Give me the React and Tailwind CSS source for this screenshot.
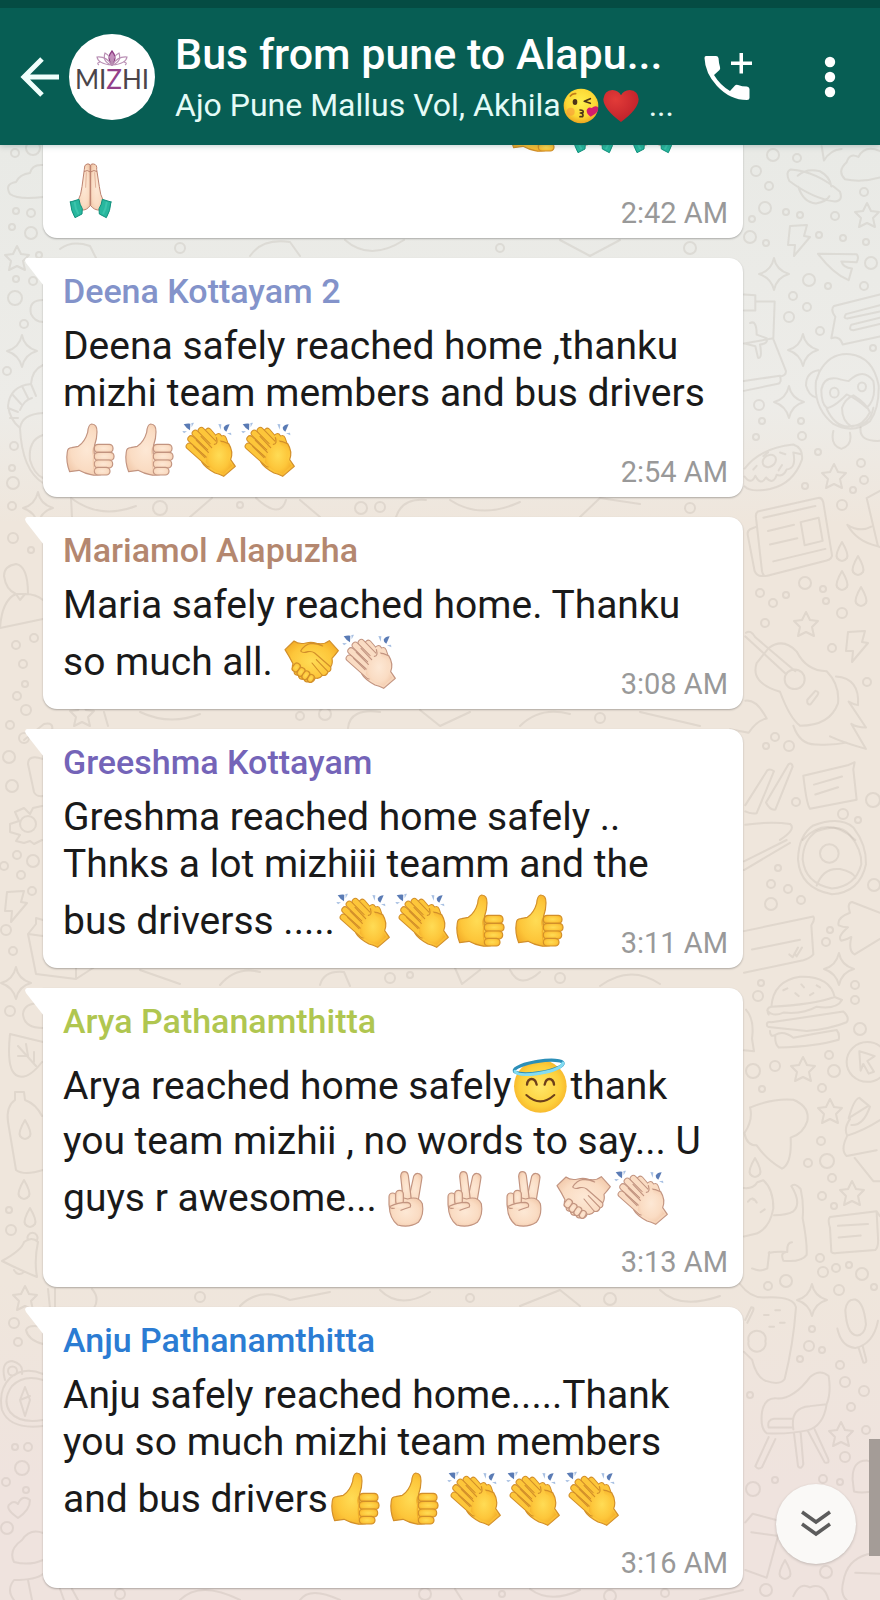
import React from "react";

/* ---------- emoji drawings (177 x 195 unit canvas) ---------- */

const YELLOW = { light: "#ffdc55", mid: "#fdc63a", dark: "#f0a422", line: "#d28f2a" };
const PALE = { light: "#fde8d5", mid: "#fadcc3", dark: "#efc3a3", line: "#c29480" };

function Emoji({ label, tone, children }) {
  const id = React.useId();
  return (
    <svg
      role="img"
      aria-label={label}
      viewBox="0 0 177 195"
      className="inline-block h-[65px] w-[59px] align-[-19px]"
    >
      {tone && (
        <defs>
          <radialGradient id={id} cx="50%" cy="50%" r="65%">
            <stop offset="0" stopColor={tone.light} />
            <stop offset="0.6" stopColor={tone.mid} />
            <stop offset="1" stopColor={tone.dark} />
          </radialGradient>
        </defs>
      )}
      {children(`url(#${id})`)}
    </svg>
  );
}

function Thumb({ tone = YELLOW }) {
  return (
    <Emoji label="thumbs up" tone={tone}>
      {(fill) => (
        <g fill={fill} stroke={tone.line} strokeWidth="3.5" strokeLinejoin="round" strokeLinecap="round">
          <path d="M13 104 Q14 93 26 92 L46 88 Q66 74 74 46 Q76 22 86 21 Q103 22 102 45 Q102 64 95 84 L132 88 L128 168 Q105 178 84 173 Q66 170 48 160 L20 164 Q8 134 13 104Z" />
          <rect x="94" y="82" width="56" height="24" rx="11" />
          <rect x="94" y="106" width="59" height="24" rx="11" />
          <rect x="94" y="129" width="55" height="24" rx="11" />
          <rect x="94" y="151" width="47" height="23" rx="11" />
          <path d="M92 88 Q84 100 90 118 Q87 146 94 165" fill={tone.dark} fillOpacity="0.7" stroke="none" />
          <path d="M95 84 Q91 98 94 110" fill="none" />
        </g>
      )}
    </Emoji>
  );
}

function Clap({ tone = YELLOW }) {
  const back = ["M82 44 L128 98", "M112 60 L136 104", "M126 66 L140 106"];
  const front = ["M61 41 L116 98", "M43 49 L106 112", "M30 66 L96 126", "M25 88 L84 140"];
  return (
    <Emoji label="clapping hands" tone={tone}>
      {(fill) => (
        <g strokeLinecap="round" strokeLinejoin="round">
          <g fill="#5a7bb5">
            <path d="M8 22 Q20 18 28 20 L27 40 Q16 34 8 22Z" />
            <path d="M128 32 Q134 22 146 22 L136 44 Q128 40 128 32Z" />
          </g>
          <g fill="#a9c1e3">
            <path d="M31 18 L39 17 L32 31Z" />
            <path d="M4 42 L18 43 L9 49Z" />
            <path d="M112 21 L121 22 L119 38Z" />
            <path d="M138 49 L150 47 L151 55Z" />
          </g>
          {back.map((d) => (
            <path key={d} d={d} fill="none" stroke={tone.line} strokeWidth="23" />
          ))}
          {back.map((d) => (
            <path key={d + "f"} d={d} fill="none" stroke={tone.mid} strokeWidth="17" />
          ))}
          <path
            d="M78 82 Q110 62 143 80 Q158 104 149 128 L163 148 L128 178 Q114 171 102 168 Q70 150 62 134Z"
            fill={fill}
            stroke={tone.line}
            strokeWidth="3.5"
          />
          {front.map((d) => (
            <g key={d} fill="none">
              <path d={d} stroke={tone.line} strokeWidth="22" />
              <path d={d} stroke={tone.mid} strokeWidth="16" />
            </g>
          ))}
          <path d="M84 80 Q112 84 106 60 Q118 66 122 84 Q148 96 143 126 L154 146 L128 170 L108 164 Q86 154 74 136Z" fill={fill} />
          <path d="M106 62 Q112 82 100 82 M60 58 L92 92 M46 70 L82 106 M38 88 L72 122" fill="none" stroke={tone.line} strokeWidth="3.5" />
        </g>
      )}
    </Emoji>
  );
}

function Handshake({ tone = YELLOW }) {
  return (
    <Emoji label="handshake" tone={tone}>
      {(fill) => (
        <g fill={fill} stroke={tone.line} strokeWidth="3.5" strokeLinejoin="round" strokeLinecap="round">
          <path d="M9 62 L36 36 Q50 47 72 42 Q88 38 104 43 Q126 48 142 35 L169 65 Q158 80 150 88 Q153 104 146 114 Q149 126 138 129 Q133 142 121 139 Q112 151 100 147 Q93 164 79 158 Q69 161 66 151 Q49 152 49 139 Q34 139 37 124 Q28 116 33 104 Q24 86 9 62Z" />
          <path d="M56 66 Q68 46 88 43 Q108 43 122 51 M56 66 Q62 74 78 68 Q90 66 98 72 L146 114 M103 92 L138 128 M90 102 L120 138" fill="none" />
          <rect x="33" y="102" width="20" height="27" rx="9" transform="rotate(35 43 115)" />
          <rect x="48" y="115" width="19" height="27" rx="9" transform="rotate(35 57 128)" />
          <rect x="63" y="125" width="18" height="28" rx="9" transform="rotate(35 72 138)" />
          <rect x="78" y="136" width="17" height="24" rx="8" transform="rotate(30 86 148)" />
        </g>
      )}
    </Emoji>
  );
}

function Victory({ tone = PALE }) {
  return (
    <Emoji label="victory hand" tone={tone}>
      {(fill) => (
        <g fill={fill} stroke={tone.line} strokeWidth="3.5" strokeLinejoin="round" strokeLinecap="round">
          <path d="M92 116 L110 34 Q116 22 126 26 Q138 30 134 44 L122 116Z" />
          <path d="M80 116 L71 34 Q72 20 82 20 Q92 20 94 32 L104 112Z" />
          <path d="M40 108 Q62 92 92 102 Q124 92 136 116 Q142 150 124 172 Q96 190 62 180 Q38 160 37 126Z" />
          <rect x="36" y="84" width="22" height="46" rx="11" />
          <rect x="56" y="76" width="23" height="44" rx="11" />
          <path d="M40 124 Q62 112 90 112 Q104 114 100 126 Q82 132 72 136" />
        </g>
      )}
    </Emoji>
  );
}

function Prayer() {
  return (
    <Emoji label="folded hands" tone={PALE}>
      {(fill) => (
        <g strokeLinejoin="round" strokeLinecap="round" stroke="#bd8370" strokeWidth="3">
          <path d="M82 22 Q80 16 72 18 Q63 20 64 34 L57 86 Q54 112 46 126 L55 156 Q72 158 82 142Z" fill={fill} />
          <path d="M82 22 Q84 16 92 18 Q103 20 101 34 L109 86 Q112 112 120 126 L111 156 Q94 158 82 142Z" fill={fill} />
          <path d="M83 22 V140 M64 40 Q73 34 81 41 M84 41 Q93 34 101 40" fill="none" />
          <path d="M70 44 L68 88 M95 44 L98 88" fill="none" stroke="#e3b49b" />
          <path d="M22 132 L48 124 Q50 140 58 152 L57 168 L36 179 Q24 160 22 132Z" fill="#28b79e" stroke="#12917d" />
          <path d="M144 132 L118 124 Q116 140 108 152 L109 168 L130 179 Q142 160 144 132Z" fill="#28b79e" stroke="#12917d" />
          <path d="M35 134 Q37 152 45 166 M131 134 Q129 152 121 166" fill="none" stroke="#3cc4ac" strokeWidth="6" />
        </g>
      )}
    </Emoji>
  );
}

function Halo() {
  return (
    <Emoji label="smiling face with halo" tone={{ light: "#ffe769", mid: "#fdcf3a", dark: "#f2a021" }}>
      {(fill) => (
        <g strokeLinecap="round" fill="none">
          <circle cx="88" cy="100" r="79" fill={fill} />
          <ellipse cx="83" cy="42" rx="74" ry="17" transform="rotate(-9 83 42)" stroke="#2c8fb8" strokeWidth="10" />
          <path d="M12 55 Q20 70 78 62 Q150 52 156 30" stroke="#83dcf2" strokeWidth="9" />
          <path d="M48 95 Q50 78 62 78 Q74 78 77 95 M101 95 Q104 78 115 78 Q127 78 129 95" stroke="#6d3f1a" strokeWidth="7" />
          <path d="M46 126 Q88 164 130 126" stroke="#6d3f1a" strokeWidth="6" />
        </g>
      )}
    </Emoji>
  );
}

const smallEmoji = "inline-block size-10 align-[-10px]";

function KissFace() {
  return (
    <svg role="img" aria-label="face blowing a kiss" viewBox="0 0 120 120" className={smallEmoji}>
      <defs>
        <radialGradient id="kiss" cx="50%" cy="40%" r="60%">
          <stop offset="0" stopColor="#fff04e" />
          <stop offset="0.7" stopColor="#fcd734" />
          <stop offset="1" stopColor="#eda51f" />
        </radialGradient>
      </defs>
      <circle cx="60" cy="60" r="52" fill="url(#kiss)" />
      <circle cx="29" cy="77" r="12" fill="#f79a3b" opacity="0.6" />
      <ellipse cx="42" cy="48" rx="7" ry="9" fill="#4d3517" />
      <g fill="none" stroke="#4d3517" strokeWidth="5" strokeLinecap="round" strokeLinejoin="round">
        <path d="M88 38 L70 46 L88 52" />
        <path d="M28 30 Q34 22 44 23" stroke="#c17c1a" />
        <path d="M57 72 Q69 72 66 80 L58 81 Q69 83 65 92 L57 92" />
      </g>
      <path d="M89 92 Q76 84 77 72 Q82 62 92 66 Q103 56 111 64 Q116 80 89 92Z" fill="#d31d6d" />
    </svg>
  );
}

function Heart() {
  return (
    <svg role="img" aria-label="red heart" viewBox="0 0 120 120" className={smallEmoji}>
      <defs>
        <radialGradient id="heart" cx="35%" cy="30%" r="75%">
          <stop offset="0" stopColor="#e23b38" />
          <stop offset="1" stopColor="#bf202a" />
        </radialGradient>
      </defs>
      <path d="M60 108 Q8 70 7 40 Q10 13 34 12 Q52 13 60 28 Q68 13 86 12 Q112 14 113 40 Q112 70 60 108Z" fill="url(#heart)" />
    </svg>
  );
}

/* ---------- wallpaper ---------- */

const STAR4 = "M0 -16 Q2 -4 15 0 Q3 3 0 16 Q-3 4 -15 0 Q-3 -3 0 -16Z";
const STAR5 = "M0 -12 L4 -4 L12 -3 L6 3 L8 12 L0 8 L-8 12 L-6 3 L-12 -3 L-4 -4Z";
const BOLT = "M-8 -14 L9 -15 L6 -4 L12 -3 L-4 16 L-3 5 L-10 5Z";
const DROP = "M0 -10 Q-7 2 -5 6 Q0 12 5 6 Q7 2 0 -10Z";

const SMALL = [
  [STAR4, 774, 274], [STAR4, 803, 350], [STAR4, 789, 402], [STAR4, 839, 969], [STAR4, 812, 1300], [STAR4, 22, 351],
  [STAR4, 38, 508], [STAR4, 16, 983], [STAR5, 867, 215], [STAR5, 834, 476], [STAR5, 806, 624], [STAR5, 803, 1069],
  [STAR5, 830, 1111], [STAR5, 852, 1193], [STAR5, 841, 1434], [STAR5, 17, 258], [STAR5, 25, 1298], [STAR5, 82, 714],
  [BOLT, 798, 240], [BOLT, 856, 646], [BOLT, 15, 906], [DROP, 842, 552], [DROP, 858, 566], [DROP, 842, 581],
  [DROP, 861, 597], [DROP, 755, 1168], [DROP, 24, 1190], [DROP, 30, 1218], [DROP, 25, 1130], [DROP, 785, 1570],
];

const DOTS = [
  [773, 155, 6], [797, 158, 4], [756, 171, 5], [769, 186, 4], [765, 208, 6], [786, 212, 3], [800, 215, 3], [835, 216, 4], [864, 192, 4],
  [752, 219, 3], [750, 237, 6], [766, 243, 3], [819, 235, 3], [843, 238, 3], [866, 242, 3], [871, 263, 6], [809, 280, 6], [828, 286, 3],
  [864, 286, 4], [793, 296, 4], [807, 307, 4], [789, 317, 5], [820, 331, 4], [873, 348, 3], [759, 405, 5], [762, 421, 3], [801, 421, 3],
  [802, 436, 4], [756, 437, 3], [818, 452, 3], [861, 463, 4], [864, 480, 4], [805, 486, 3], [853, 490, 3], [842, 505, 5], [805, 583, 6],
  [760, 593, 4], [773, 603, 4], [786, 595, 3], [823, 589, 3], [826, 601, 3], [842, 613, 5], [765, 623, 4], [832, 648, 4], [867, 682, 4],
  [775, 737, 4], [766, 746, 3], [789, 746, 5], [796, 802, 4], [873, 800, 7], [843, 814, 5], [858, 820, 3], [778, 868, 3], [771, 884, 4],
  [788, 889, 4], [771, 904, 6], [801, 900, 4], [874, 885, 6], [830, 930, 3], [826, 942, 4], [761, 983, 3], [758, 996, 5], [855, 985, 4],
  [855, 1000, 4], [860, 1029, 6], [829, 1055, 4], [753, 1071, 7], [775, 1066, 5], [834, 1071, 6], [762, 1089, 3], [822, 1088, 4],
  [821, 1141, 4], [808, 1163, 4], [827, 1161, 7], [832, 1178, 4], [822, 1196, 4], [834, 1206, 3], [820, 1258, 4], [823, 1272, 5],
  [836, 1268, 4], [849, 1265, 3], [862, 1274, 6], [786, 1281, 6], [768, 1286, 4], [839, 1290, 5], [874, 1287, 3], [812, 1329, 3],
  [809, 1346, 5], [822, 1350, 3], [800, 1359, 3], [840, 1365, 4], [845, 1382, 5], [864, 1391, 5], [851, 1407, 4], [750, 1395, 3],
  [866, 1430, 4], [845, 1457, 5], [753, 1489, 7], [775, 1480, 3], [823, 1479, 4], [840, 1482, 3], [826, 1572, 6], [766, 1590, 6],
  [15, 153, 4], [33, 148, 7], [16, 211, 3], [31, 213, 4], [12, 227, 3], [31, 233, 6], [39, 255, 3], [16, 279, 3], [33, 281, 4],
  [15, 298, 7], [24, 324, 4], [7, 371, 4], [14, 446, 4], [12, 468, 3], [13, 483, 6], [12, 506, 4], [13, 538, 5], [31, 550, 3],
  [16, 645, 4], [34, 638, 4], [23, 664, 4], [25, 684, 3], [17, 696, 4], [26, 710, 5], [10, 725, 4], [24, 738, 5], [9, 757, 6],
  [12, 786, 6], [17, 855, 4], [4, 866, 4], [33, 861, 6], [21, 875, 4], [32, 891, 4], [6, 930, 5], [13, 951, 4], [10, 1011, 5],
  [9, 1210, 3], [11, 1230, 5], [14, 1323, 5], [18, 1342, 4], [15, 1447, 3], [28, 1447, 4], [22, 1468, 7], [6, 1482, 4],
  [26, 1490, 3], [7, 1528, 6], [240, 505, 3], [361, 508, 6], [380, 507, 5], [160, 508, 7], [300, 716, 4], [325, 714, 6],
  [390, 978, 5], [410, 975, 3], [560, 978, 5], [200, 1297, 5], [470, 1298, 4], [610, 1299, 6], [180, 248, 5], [500, 248, 4],
  [690, 248, 6], [600, 718, 5], [120, 1594, 5], [425, 1594, 6], [502, 1594, 3], [610, 1596, 6], [665, 1593, 4], [690, 508, 5],
];

const UPPER_RIGHT = [
  "M182 66 Q165 72 178 92 Q250 132 315 138 Q340 136 330 116 Q260 70 182 66Z M203 80 Q230 62 270 70 Q300 82 304 104 M205 105 Q220 140 258 142 Q290 138 298 126",
  "M345 88 Q320 70 350 50 Q358 28 385 38 Q405 10 450 25 M345 88 Q395 96 450 84",
  "M275 14 L282 46 Q300 22 335 20",
  "M264 255 L380 256 Q388 262 380 274 L334 272 Q340 286 366 288 L356 314 Q310 300 264 255Z",
  "M42 346 L76 348 V382 H42 M76 362 H134 L130 444 L42 456 M130 446 L168 518 Q168 528 150 530 M42 540 L150 528 Q156 544 144 546 L42 562 M60 410 Q80 402 80 436 L110 444 Q116 456 90 458 Q98 490 84 488 L76 462 L44 456",
  "M450 346 L312 372 Q300 380 316 396 L304 444 Q330 438 338 458 L450 440 M450 370 L348 390 Q338 400 352 400 L450 384 M450 398 L364 414 Q354 426 370 426 L450 412",
  "M268 520 Q300 476 360 480 Q430 486 446 550 Q448 600 420 630 Q370 660 310 636 Q250 600 258 540Z M266 516 Q228 520 228 550 Q236 572 256 576 M274 560 Q280 530 320 534 Q350 540 356 540 Q400 508 430 540 Q440 580 410 600 Q380 580 350 570 Q310 600 290 600 Q274 590 274 560Z M290 602 Q320 650 370 640 Q420 640 430 600 M336 600 Q345 580 370 572 Q410 590 420 610 Q400 640 365 642 Q336 630 336 600Z M300 566 a13 11 0 1 0 26 0 a13 11 0 1 0 -26 0 M384 553 a12 10 0 1 0 24 0 a12 10 0 1 0 -24 0",
  "M310 652 Q300 684 334 692 Q368 684 360 656 M392 644 Q386 676 450 674",
  "M44 736 Q90 690 190 682 Q220 690 216 716 Q190 770 120 782 Q60 790 44 776 M44 754 Q64 774 76 752 Q92 776 108 756 Q130 774 140 750 Q160 756 170 738 Q200 736 190 700 L214 704 M98 722 a20 13 -15 1 0 40 -6 a20 13 -15 1 0 -40 6 M100 708 l14 -8 M150 700 l16 4 M80 730 l-10 8 M156 728 l-10 12",
  "M84 832 L264 802 Q276 800 280 812 L306 930 Q306 938 290 942 L112 976 Q100 980 96 966 L78 846 Q76 836 84 832Z M80 866 L60 872 Q50 876 54 888 L74 966 Q82 980 104 976 M100 846 L256 820 M114 876 L192 862 M120 906 L202 892 M130 944 L286 916 M212 856 L266 846 L278 898 L224 908Z",
  "M450 786 L410 802 L444 910 Q380 900 352 862 Q390 880 424 866 M444 910 L450 912",
  "M48 1104 Q62 1096 76 1114 L196 1190 M46 1112 L168 1196 M116 1138 Q160 1114 200 1146 Q230 1190 290 1190 Q330 1220 324 1262 Q300 1312 210 1312 Q180 1296 150 1236 Q60 1216 80 1172Z M164 1208 a30 22 0 1 0 60 0 a30 22 0 1 0 -60 0 M232 1254 L256 1234 Q270 1236 262 1244 L242 1264 Q230 1266 232 1254",
  "M318 1202 Q390 1206 384 1266 Q370 1264 356 1258 L408 1316 Q380 1316 364 1308 L408 1364 Q340 1350 300 1336 M190 1312 Q210 1356 260 1354 Q310 1356 350 1350",
  "M46 1256 Q80 1252 110 1296 Q80 1300 56 1328 L0 1320",
  "M46 1490 L112 1412 Q120 1408 132 1414 L80 1508 Q60 1510 46 1504 M108 1484 L176 1398 Q186 1394 188 1404 L136 1500 Q120 1502 108 1484",
  "M220 1424 L356 1400 L374 1394 L370 1410 L380 1478 L240 1498 Q230 1490 220 1424Z M252 1444 L336 1426 M256 1466 L324 1450",
  "M46 1534 Q120 1526 180 1532 Q200 1544 150 1568 M218 1568 Q290 1510 376 1568",
];

const LOWER_RIGHT = [
  "M42 44 L170 0 M42 62 L180 6",
  "M204 40 Q206 -10 250 -30 Q330 -50 370 -26 Q410 10 408 50 Q390 108 306 112 Q210 100 204 40Z M218 40 Q220 0 260 -18 Q330 -36 360 -10 Q396 20 394 50 Q376 96 306 100 Q226 90 218 40Z M270 28 a28 19 0 1 0 56 0 a28 19 0 1 0 -56 0 M260 94 Q280 56 330 60 Q370 66 376 78",
  "M42 188 L250 158 Q256 164 244 176 L250 236 Q240 244 220 248 L42 274 M66 226 L210 206 M178 236 L188 242 L204 222 M194 234 L200 240 L216 222",
  "M450 150 L366 128 Q350 130 360 150 Q320 160 326 176 Q340 180 354 180 Q320 200 334 208 Q350 206 364 200 Q354 230 374 236 L450 204",
  "M124 344 Q130 290 210 282 Q300 280 314 324 Q250 340 124 344Z M112 352 Q130 366 160 356 Q220 360 260 344 Q320 350 336 330 L314 324 M124 344 Q106 346 116 360 M112 384 Q106 374 124 376 L340 354 Q360 366 350 376 Q300 390 230 394 L116 386 M120 394 Q120 408 136 402 Q160 392 190 408 Q250 400 320 392 Q330 400 326 412 Q260 426 146 428 Q134 420 136 404 M160 310 l12 -4 M196 316 l10 6 M214 298 l8 6 M240 320 l10 -4 M260 300 l10 4",
  "M48 350 Q74 370 66 410 L72 436 L42 434",
  "M350 458 a62 41 0 1 0 124 0 a62 41 0 1 0 -124 0 M388 436 Q410 440 434 446 L412 456 L432 478 L416 482 L400 462 L392 476Z",
  "M60 552 Q130 532 190 536 Q240 550 232 580 Q220 606 182 614 Q186 668 156 678 Q110 660 80 630 Q50 630 44 606 M60 552 Q70 576 44 604",
  "M388 532 L416 548 L356 574 Q372 534 388 532Z M360 576 Q340 596 352 610 Q330 640 350 652 L440 640 M352 610 Q400 600 450 578 M374 656 L430 704 L450 704 M364 588 Q400 590 420 550",
  "M42 718 Q70 720 82 706 L100 702 Q130 720 130 760 Q120 800 80 812 L42 818 M132 774 Q170 774 190 766 Q216 750 184 714 Q194 706 212 720 Q222 750 218 780 Q232 830 230 856 Q214 872 160 868 Q150 852 168 850 M116 852 Q140 848 172 850 Q170 830 186 830 M118 850 L112 884 Q90 892 66 884 M54 746 q14 -14 26 2 M70 742 h4 M92 768 l12 -6",
  "M300 778 L440 766 L450 776 M300 778 Q292 782 300 800 L304 850 Q310 854 320 852 L436 846 Q446 840 444 820 L440 768 M324 796 L414 792 M326 820 L392 816",
  "M30 916 Q60 944 100 944 Q190 940 198 964 Q190 1040 164 1112 Q150 1126 108 1116 Q80 1110 66 1072 L42 1056 M56 1034 a26 17 0 1 0 50 0 a26 17 0 1 0 -50 0 M102 980 h14 M136 970 h14 M118 1004 h14 M150 996 h14 M46 990 L64 964 Q76 964 66 976 L52 996",
  "M346 970 Q350 946 376 948 Q402 954 408 1000 Q402 1024 378 1022 Q350 1018 346 970Z M322 1008 Q334 1046 376 1048 Q430 1040 444 992 M386 1048 L400 1078 Q412 1080 408 1070 L398 1044",
  "M96 1180 Q104 1150 140 1152 Q190 1154 240 1108 Q270 1090 296 1106 Q304 1140 290 1164 Q280 1210 232 1218 Q180 1226 110 1224 Q90 1214 96 1180Z M190 1216 Q180 1170 240 1168 L290 1164 M116 1212 Q110 1196 132 1194 L190 1194 M116 1212 H188 M116 1232 L76 1292 Q84 1300 96 1294 L136 1236 M192 1224 L204 1292 Q214 1300 220 1288 L212 1222 M234 1220 L284 1284 Q300 1288 294 1276 L254 1216",
  "M46 1408 L68 1390 L156 1406 L110 1522 L46 1506 M64 1428 L146 1436",
  "M368 1320 Q366 1280 410 1280 L450 1290 M368 1320 L372 1344 Q400 1350 450 1340",
  "M340 1530 Q350 1486 410 1474 L450 1468 M190 1560 Q210 1530 240 1542 Q280 1530 296 1568 M340 1530 Q330 1556 350 1568 M376 1512 L450 1514",
];

const LEFT = [
  "M43 165 Q32 164 30 173 Q20 174 16 182 Q4 184 10 194 Q18 200 43 197",
  "M43 300 Q28 300 31 314 Q35 322 43 322 M43 365 Q32 370 31 384 Q10 386 8 406 Q10 420 20 428 M20 410 Q24 400 32 398 M31 384 L36 396 M22 386 L28 398 M12 394 L21 404 M8 408 L18 412 M10 418 L18 418 M20 428 Q22 414 43 413 M20 428 Q22 470 43 483 M43 435 Q28 440 30 460 Q34 474 43 478",
  "M28 594 Q28 566 16 564 Q4 566 4 576 Q6 590 16 594 L24 594 M16 594 Q2 600 0 628 L43 619 M16 594 L20 600 L25 594 Q36 594 43 600",
  "M24 740 L44 724 Q54 722 52 730 L38 740",
  "M43 759 Q28 754 28 764 L34 792 Q36 797 43 796 M42 806 L33 808 L30 814 L24 808 L15 812 L19 821 L10 824 V832 L20 835 L16 841 L24 843 L30 841 L34 844 L42 840 M20 824 a8 8 0 1 0 16 0 a8 8 0 1 0 -16 0",
  "M43 920 L36 918 V924 L28 934 L36 974 L76 979 L96 966 M28 934 L43 936 M76 979 V967",
  "M43 1003 Q24 1002 23 1014 Q24 1028 43 1028 M10 1034 L43 1042 M10 1034 Q6 1072 18 1076 Q28 1080 42 1062 M18 1046 L36 1066 M26 1044 L28 1056 L18 1056 M34 1052 L34 1062",
  "M15 1100 V1092 H24 L25 1100 Q36 1104 42 1116 M15 1100 Q6 1106 8 1122 L16 1170 Q24 1176 43 1170",
  "M2 1261 Q22 1250 24 1242 Q32 1236 38 1242 Q34 1260 37 1277 Q20 1270 2 1261Z M28 1240 a5 5 0 1 1 9 0 M14 1270 Q18 1277 24 1272",
  "M43 1327 Q28 1324 26 1330 Q28 1340 43 1344 M43 1374 Q24 1366 10 1378 Q-2 1390 2 1410 Q10 1430 43 1426 M43 1380 Q24 1374 12 1386 Q2 1400 10 1412 Q20 1424 43 1420 M25 1387 L20 1400 L25 1416 L30 1400Z M20 1400 L30 1396 M5 1380 Q0 1362 12 1361 Q24 1364 22 1374 M8 1371 a4 4 0 1 0 9 0 a4 4 0 1 0 -9 0",
  "M18 1518 Q4 1508 10 1504 Q14 1500 18 1504 Q22 1494 30 1500 Q30 1510 18 1518Z",
  "M43 1533 Q30 1528 22 1540 Q8 1550 14 1562 Q30 1566 43 1560 M43 1574 Q36 1580 14 1580 Q6 1590 14 1600 M28 1580 L32 1600",
];

const GAPS = [
  "M60 249 Q72 240 90 246 L96 258 M250 256 Q262 238 290 242 L300 256 M345 240 Q370 262 404 240 M560 240 L590 256 L620 240",
  "M71 498 L72 517 M71 498 Q100 520 136 506 M190 517 L212 498 M256 498 Q280 520 286 500 M300 500 L320 517 M396 517 Q402 498 426 500 M450 500 Q480 520 520 502 M580 517 L600 498 L640 504",
  "M348 728 Q350 708 380 712 M104 712 L108 726 M140 712 Q170 726 200 714 M420 710 L440 726 L470 712 M520 726 Q540 706 570 714 M640 712 L700 726",
  "M320 985 Q324 970 344 972 L350 986 M455 968 L462 984 L480 970 M510 970 Q520 990 540 972 M600 986 Q630 964 660 984 M140 970 L180 984 M220 985 Q236 966 260 972",
  "M48 1289 L50 1308 M55 1289 V1308 M92 1289 Q100 1298 94 1308 M240 1306 Q260 1286 290 1300 L330 1292 M380 1290 Q400 1310 430 1292 M520 1306 L560 1290 L580 1306 M660 1290 Q680 1310 720 1296",
  "M60 1589 L64 1600 M72 1589 L78 1600 M180 1600 Q200 1580 240 1600 M300 1600 Q310 1586 340 1600 M455 1589 L462 1600 M530 1589 Q550 1604 580 1590 M700 1600 L743 1590",
];

function Paths({ list }) {
  return list.map((d) => <path key={d} d={d} vectorEffect="non-scaling-stroke" />);
}

function Wallpaper() {
  return (
    <svg
      aria-hidden="true"
      viewBox="0 145 880 1455"
      preserveAspectRatio="xMidYMin slice"
      className="absolute inset-0 h-full w-full"
    >
      <g fill="none" stroke="#a39d91" strokeOpacity="0.2" strokeWidth="2" strokeLinecap="round" strokeLinejoin="round">
        <g transform="translate(730 140) scale(0.3333 0.4464)"><Paths list={UPPER_RIGHT} /></g>
        <g transform="translate(730 840) scale(0.3333 0.4847)"><Paths list={LOWER_RIGHT} /></g>
        <Paths list={LEFT} />
        <Paths list={GAPS} />
        {DOTS.map(([x, y, r]) => (
          <circle key={`${x}-${y}`} cx={x} cy={y} r={r} />
        ))}
        {SMALL.map(([d, x, y]) => (
          <path key={`${x}-${y}`} d={d} transform={`translate(${x} ${y})`} />
        ))}
      </g>
    </svg>
  );
}

/* ---------- chat ---------- */

function Bubble({ name, color, time, timeBelow, className = "", children }) {
  return (
    <article
      className={`relative flex w-full max-w-[700px] flex-col rounded-b-[14px] rounded-tr-[14px] bg-white pb-2 shadow-[0_1px_2px_rgba(0,0,0,0.28)] ${className}`}
    >
      {name && (
        <>
          <svg aria-hidden="true" viewBox="0 0 19 28" className="absolute top-0 -left-[18px] h-7 w-[19px]">
            <path d="M2 0 H19 V28 L1 5 Q-1 1 2 0Z" fill="#fff" />
          </svg>
          <h2 className={`mt-[13px] mb-3 px-5 text-[34px] leading-[40px] font-medium ${color}`}>{name}</h2>
        </>
      )}
      <p className="pl-5 text-[39px] leading-[47px] text-[#1a1a1a]">{children}</p>
      <time
        className={`self-end pr-[15px] text-[29px] leading-[34px] text-[#999999] ${timeBelow ? "mt-[15px]" : "-mt-[27px]"}`}
      >
        {time}
      </time>
    </article>
  );
}

function Header() {
  return (
    <header className="relative z-10 border-t-8 border-[#054c43] bg-[#075e54] text-white shadow-[0_1px_6px_rgba(0,60,60,0.25)]">
      <div className="flex h-[137px] items-center pr-8 pl-5">
        <button type="button" aria-label="Back" className="shrink-0">
          <svg viewBox="0 0 40 40" className="size-10" fill="none" stroke="#f0fffc" strokeWidth="5">
            <path d="M39 20 H4 M22 2 L4 20 L22 38" />
          </svg>
        </button>
        <div className="ml-[9px] flex size-[86px] shrink-0 flex-col items-center rounded-full bg-white pt-4">
          <svg aria-hidden="true" viewBox="0 0 32 16" className="h-4 w-8" fill="none" stroke="#b98fb4" strokeWidth="1.2">
            <path d="M16 15 Q10 8 16 1 Q22 8 16 15Z" stroke="#8d3b83" fill="#c58fbd" />
            <path d="M16 15 Q6 12 9 3 Q15 6 16 15Z M16 15 Q26 12 23 3 Q17 6 16 15Z" />
            <path d="M16 15 Q2 14 1 7 Q10 6 16 15Z M16 15 Q30 14 31 7 Q22 6 16 15Z" />
            <path d="M4 12 Q0 13 3 15 M28 12 Q32 13 29 15" />
          </svg>
          <span className="font-['Lato',sans-serif] text-[26px] leading-[26px] text-[#4b4549]">
            MI<span className="text-[#93408a]">Z</span>HI
          </span>
        </div>
        <div className="ml-5 max-w-[500px] min-w-0 flex-1 pt-1">
          <h1 className="truncate text-[43px] leading-[52px] font-medium">Bus from pune to Alapu...</h1>
          <p className="truncate text-[32px] leading-[50px] text-[#e4fbf7]">
            Ajo Pune Mallus Vol, Akhila
            <KissFace />
            <Heart /> ...
          </p>
        </div>
        <button type="button" aria-label="Add call" className="ml-auto shrink-0">
          <svg viewBox="0 0 48 48" className="size-12" fill="#fff">
            <path d="M2 3 H12 Q14 3 14.500 5 Q14.800 10 16 14 Q16.500 16 15.500 17 L10 22 Q16 32 26 38 L31 32.500 Q32 31.500 34 32 Q38 33.500 43 33.500 Q45.500 34 45.500 36 V45 Q45.500 47 43 47 Q26 47 13 33 Q1 20 0.500 5 Q0.500 3 2 3Z" />
            <path d="M35.500 0 H39 V8.500 H48 V12 H39 V20.500 H35.500 V12 H27 V8.500 H35.500Z" />
          </svg>
        </button>
        <button type="button" aria-label="More options" className="ml-[60px] shrink-0">
          <svg viewBox="0 0 36 42" className="h-[42px] w-9" fill="#fff">
            <circle cx="18" cy="6" r="5.200" />
            <circle cx="18" cy="21" r="5.200" />
            <circle cx="18" cy="36" r="5.200" />
          </svg>
        </button>
      </div>
    </header>
  );
}

export default function App() {
  return (
    <div className="relative flex min-h-screen flex-col font-['Roboto',sans-serif]">
      <Header />
      <main className="relative flex-1 overflow-hidden bg-[linear-gradient(to_bottom,#e9eae6_0%,#edece8_18%,#efe6dc_26%,#efe6dc_78%,#efe3de_92%)]">
        <Wallpaper />
        <div className="relative flex flex-col gap-5 pr-5 pb-3 pl-[43px]">
          <Bubble time="2:42 AM" className="-mt-[52px]">
            <span className="block pl-[444px]">
              <Thumb />
              <Prayer />
              <Prayer />
            </span>
            <Prayer />
          </Bubble>
          <Bubble name="Deena Kottayam 2" color="text-[#8393ca]" time="2:54 AM">
            Deena safely reached home ,thanku
            <br />
            mizhi team members and bus drivers
            <br />
            <Thumb tone={PALE} />
            <Thumb tone={PALE} />
            <Clap />
            <Clap />
          </Bubble>
          <Bubble name="Mariamol Alapuzha" color="text-[#b4876f]" time="3:08 AM">
            Maria safely reached home. Thanku
            <br />
            so much all. <Handshake />
            <Clap tone={PALE} />
          </Bubble>
          <Bubble name="Greeshma Kottayam" color="text-[#7464b8]" time="3:11 AM">
            Greshma reached home safely ..
            <br />
            Thnks a lot mizhiii teamm and the
            <br />
            bus driverss .....
            <Clap />
            <Clap />
            <Thumb />
            <Thumb />
          </Bubble>
          <Bubble name="Arya Pathanamthitta" color="text-[#b0c650]" time="3:13 AM" timeBelow>
            Arya reached home safely
            <Halo />
            thank
            <br />
            you team mizhii , no words to say... U
            <br />
            guys r awesome...
            <Victory />
            <Victory />
            <Victory />
            <Handshake tone={PALE} />
            <Clap tone={PALE} />
          </Bubble>
          <Bubble name="Anju Pathanamthitta" color="text-[#2b7cd3]" time="3:16 AM" timeBelow>
            Anju safely reached home.....Thank
            <br />
            you so much mizhi team members
            <br />
            and bus drivers
            <Thumb />
            <Thumb />
            <Clap />
            <Clap />
            <Clap />
          </Bubble>
        </div>
        <button
          type="button"
          aria-label="Scroll to latest"
          className="absolute right-6 bottom-9 flex size-20 items-center justify-center rounded-full bg-[#faf9f7] shadow-[0_1px_3px_rgba(0,0,0,0.2)]"
        >
          <svg viewBox="0 0 30 28" className="h-7 w-[30px]" fill="none" stroke="#5c5c5c" strokeWidth="3.500">
            <path d="M1 2 L15 12 L29 2 M1 14 L15 24 L29 14" />
          </svg>
        </button>
        <div aria-hidden="true" className="absolute right-0 bottom-11 h-[117px] w-[11px] bg-[#a49c97]" />
      </main>
    </div>
  );
}
